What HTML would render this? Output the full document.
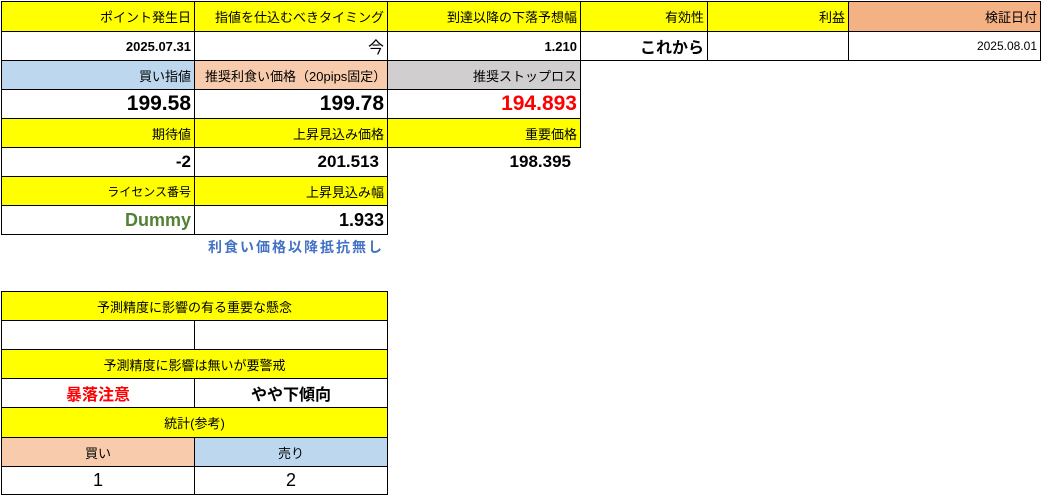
<!DOCTYPE html>
<html><head><meta charset="utf-8"><style>
body{margin:0;width:1043px;height:496px;background:#fff;position:relative;overflow:hidden;font-family:"Liberation Sans","Noto Sans CJK JP",sans-serif;}
.c{position:absolute;box-sizing:border-box;border:1px solid #000;display:flex;align-items:center;justify-content:flex-end;padding-right:3px;font-size:13px;color:#000;white-space:nowrap;overflow:hidden}
.y{background:#ffff00}
.b{font-weight:bold}
.L{font-size:21px;font-weight:bold}
.ctr{justify-content:center;padding:0}
.nb{border:none}
</style></head><body>
<!-- row1 -->
<div class="c y" style="left:1px;top:1px;width:194px;height:31px">ポイント発生日</div>
<div class="c y" style="left:194px;top:1px;width:194px;height:31px">指値を仕込むべきタイミング</div>
<div class="c y" style="left:387px;top:1px;width:194px;height:31px">到達以降の下落予想幅</div>
<div class="c y" style="left:580px;top:1px;width:128px;height:31px">有効性</div>
<div class="c y" style="left:707px;top:1px;width:142px;height:31px">利益</div>
<div class="c" style="left:848px;top:1px;width:193px;height:31px;background:#f4b183">検証日付</div>
<!-- row2 -->
<div class="c b" style="left:1px;top:31px;width:194px;height:30px">2025.07.31</div>
<div class="c" style="left:194px;top:31px;width:194px;height:30px;font-size:16px">今</div>
<div class="c b" style="left:387px;top:31px;width:194px;height:30px">1.210</div>
<div class="c b" style="left:580px;top:31px;width:128px;height:30px;font-size:16px">これから</div>
<div class="c" style="left:707px;top:31px;width:142px;height:30px"></div>
<div class="c" style="left:848px;top:31px;width:193px;height:30px;font-size:12px">2025.08.01</div>
<!-- row3 -->
<div class="c" style="left:1px;top:60px;width:194px;height:30px;background:#bdd7ee">買い指値</div>
<div class="c" style="left:194px;top:60px;width:194px;height:30px;background:#f8cbad;justify-content:flex-start;padding-left:10px">推奨利食い価格（20pips固定）</div>
<div class="c" style="left:387px;top:60px;width:194px;height:30px;background:#d0cece">推奨ストップロス</div>
<!-- row4 -->
<div class="c L" style="left:1px;top:89px;width:194px;height:30px">199.58</div>
<div class="c L" style="left:194px;top:89px;width:194px;height:30px">199.78</div>
<div class="c L" style="left:387px;top:89px;width:194px;height:30px;color:#ff0000">194.893</div>
<!-- row5 -->
<div class="c y" style="left:1px;top:118px;width:194px;height:30px">期待値</div>
<div class="c y" style="left:194px;top:118px;width:194px;height:30px">上昇見込み価格</div>
<div class="c y" style="left:387px;top:118px;width:194px;height:30px">重要価格</div>
<!-- row6 -->
<div class="c b" style="left:1px;top:147px;width:194px;height:30px;font-size:17px">-2</div>
<div class="c b" style="left:194px;top:147px;width:194px;height:30px;font-size:17px;padding-right:8px">201.513</div>
<div class="c b nb" style="left:387px;top:147px;width:194px;height:30px;font-size:17px;padding-right:10px">198.395</div>
<!-- row7 -->
<div class="c y" style="left:1px;top:176px;width:194px;height:30px;font-size:12px">ライセンス番号</div>
<div class="c y" style="left:194px;top:176px;width:194px;height:30px">上昇見込み幅</div>
<!-- row8 -->
<div class="c b" style="left:1px;top:205px;width:194px;height:30px;font-size:18px;color:#538135">Dummy</div>
<div class="c b" style="left:194px;top:205px;width:194px;height:30px;font-size:18px">1.933</div>
<div class="c b nb" style="left:194px;top:233px;width:194px;height:28px;color:#4472c4;font-size:14px;letter-spacing:2px;padding-right:4px">利食い価格以降抵抗無し</div>
<!-- lower -->
<div class="c y ctr" style="left:1px;top:291px;width:387px;height:30px">予測精度に影響の有る重要な懸念</div>
<div class="c" style="left:1px;top:320px;width:194px;height:30px"></div>
<div class="c" style="left:194px;top:320px;width:194px;height:30px"></div>
<div class="c y ctr" style="left:1px;top:349px;width:387px;height:30px">予測精度に影響は無いが要警戒</div>
<div class="c ctr b" style="left:1px;top:378px;width:194px;height:30px;color:#ff0000;font-size:16px">暴落注意</div>
<div class="c ctr b" style="left:194px;top:378px;width:194px;height:30px;font-size:16px">やや下傾向</div>
<div class="c y ctr" style="left:1px;top:407px;width:387px;height:31px">統計(参考)</div>
<div class="c ctr" style="left:1px;top:437px;width:194px;height:30px;background:#f8cbad">買い</div>
<div class="c ctr" style="left:194px;top:437px;width:194px;height:30px;background:#bdd7ee">売り</div>
<div class="c ctr" style="left:1px;top:466px;width:194px;height:29px;font-size:18px">1</div>
<div class="c ctr" style="left:194px;top:466px;width:194px;height:29px;font-size:18px">2</div>
</body></html>
